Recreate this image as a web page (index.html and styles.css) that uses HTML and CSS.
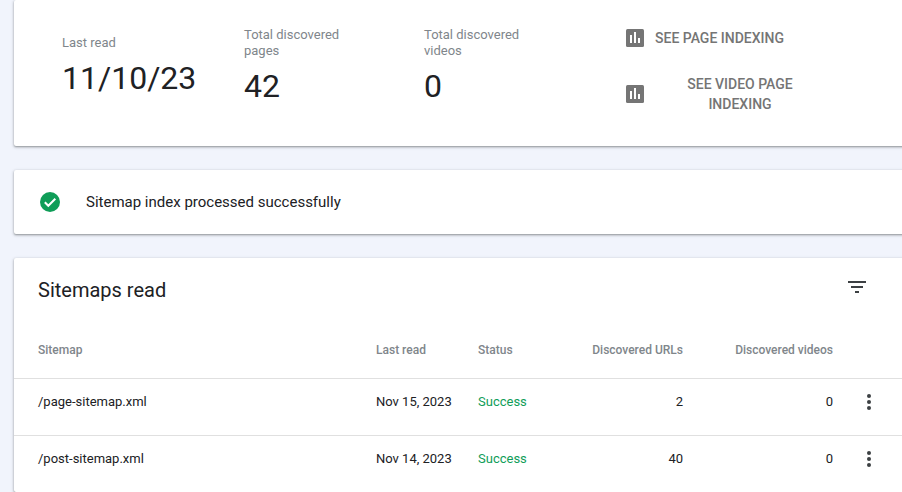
FILE: index.html
```html
<!DOCTYPE html>
<html lang="en">
<head>
<meta charset="utf-8">
<title>Sitemaps read</title>
<link rel="stylesheet" href="styles.css">
</head>
<body>
<main class="page">
  <section class="card summary">
    <div class="stat stat-date">
      <div class="stat-label">Last read</div>
      <div class="stat-value">11/10/23</div>
    </div>
    <div class="stat stat-pages">
      <div class="stat-label">Total discovered<br>pages</div>
      <div class="stat-value">42</div>
    </div>
    <div class="stat stat-videos">
      <div class="stat-label">Total discovered<br>videos</div>
      <div class="stat-value">0</div>
    </div>
    <div class="actions">
      <a class="action action-page">
        <svg class="action-icon" viewBox="0 0 20 20"><rect x="1" y="1" width="18" height="18" rx="1.500" fill="#757575"/><path fill="#fff" d="M5 7h2v8H5zM9 4h2v11H9zM13 10h2v5h-2z"/></svg>
        <span class="action-text">SEE PAGE INDEXING</span>
      </a>
      <a class="action action-video">
        <svg class="action-icon" viewBox="0 0 20 20"><rect x="1" y="1" width="18" height="18" rx="1.500" fill="#757575"/><path fill="#fff" d="M5 7h2v8H5zM9 4h2v11H9zM13 10h2v5h-2z"/></svg>
        <span class="action-text">SEE VIDEO PAGE<br>INDEXING</span>
      </a>
    </div>
  </section>

  <section class="card notice">
    <svg class="notice-icon" viewBox="0 0 20 20"><circle cx="10" cy="10" r="10" fill="#0f9d58"/><path d="M4.800 10.300l3.500 3.500 7-7" fill="none" stroke="#fff" stroke-width="2"/></svg>
    <span class="notice-text">Sitemap index processed successfully</span>
  </section>

  <section class="card sitemaps">
    <header class="sitemaps-head">
      <h2 class="sitemaps-title">Sitemaps read</h2>
      <svg class="filter-icon" viewBox="0 0 18 12"><path fill="#3c4043" d="M0 0h18v2H0zM3 5h12v2H3zM7 10h4v2H7z"/></svg>
    </header>
    <table class="table">
      <colgroup>
        <col class="col-name"><col class="col-date"><col class="col-status"><col class="col-urls"><col class="col-videos"><col class="col-menu">
      </colgroup>
      <thead>
        <tr>
          <th class="cell-name">Sitemap</th>
          <th>Last read</th>
          <th>Status</th>
          <th class="num">Discovered URLs</th>
          <th class="num">Discovered videos</th>
          <th></th>
        </tr>
      </thead>
      <tbody>
        <tr>
          <td class="cell-name">/page-sitemap.xml</td>
          <td>Nov 15, 2023</td>
          <td class="success">Success</td>
          <td class="num">2</td>
          <td class="num">0</td>
          <td class="cell-menu"><svg class="menu-icon" viewBox="0 0 4 16"><circle cx="2" cy="2" r="2" fill="#3c4043"/><circle cx="2" cy="8" r="2" fill="#3c4043"/><circle cx="2" cy="14" r="2" fill="#3c4043"/></svg></td>
        </tr>
        <tr>
          <td class="cell-name">/post-sitemap.xml</td>
          <td>Nov 14, 2023</td>
          <td class="success">Success</td>
          <td class="num">40</td>
          <td class="num">0</td>
          <td class="cell-menu"><svg class="menu-icon" viewBox="0 0 4 16"><circle cx="2" cy="2" r="2" fill="#3c4043"/><circle cx="2" cy="8" r="2" fill="#3c4043"/><circle cx="2" cy="14" r="2" fill="#3c4043"/></svg></td>
        </tr>
      </tbody>
    </table>
  </section>
</main>
</body>
</html>
```

FILE: styles.css
```css
* { box-sizing: border-box; }
html, body { margin: 0; height: 492px; overflow: hidden; }
body { background: #f1f4fc; font-family: Roboto, "Liberation Sans", sans-serif; color: #202124; }
.page { display: flex; flex-direction: column; gap: 24px; width: 910px; padding-left: 14px; }
.card { background: #fff; border-radius: 2px; box-shadow: 0 1px 2px rgba(60,64,67,.45), 0 1px 3px 1px rgba(60,64,67,.12); }

.summary { height: 146px; display: flex; align-items: center; padding: 0 0 13px 48px; }
.stat { display: flex; flex-direction: column; gap: 7px; }
.stat-date { width: 182px; }
.stat-pages { width: 180px; }
.stat-videos { width: 201px; }
.stat-label { font-size: 13px; line-height: 16px; color: #80868b; }
.stat-value { font-size: 32px; line-height: 40px; color: #202124; }

.actions { display: flex; flex-direction: column; gap: 18px; align-items: flex-start; }
.action { display: flex; align-items: center; gap: 10px; color: #757575; font-size: 14px; font-weight: 500; line-height: 20px; }
.action-icon { width: 20px; height: 20px; flex: none; }
.action-text { text-align: center; }
.action-page { height: 36px; }
.action-video .action-text { width: 170px; }

.notice { height: 64px; display: flex; align-items: center; padding-left: 26px; }
.notice-icon { width: 20px; height: 20px; flex: none; }
.notice-text { margin-left: 26px; font-size: 15px; line-height: 20px; color: #202124; }

.sitemaps { height: 234px; }
.sitemaps-head { height: 68px; display: flex; align-items: flex-start; justify-content: space-between; padding: 20px 44px 0 24px; }
.sitemaps-title { margin: 0; font-size: 20px; font-weight: 400; line-height: 24px; color: #202124; }
.filter-icon { width: 18px; height: 12px; margin-top: 3px; }

.table { width: 888px; table-layout: fixed; border-collapse: collapse; font-size: 13px; }
.col-name { width: 362px; }
.col-date { width: 102px; }
.col-status { width: 90px; }
.col-urls { width: 115px; }
.col-videos { width: 150px; }
th { height: 52px; padding: 0 0 4px; font-size: 12px; font-weight: 500; text-align: left; color: #80868b; border-bottom: 1px solid #e0e0e0; }
td { height: 57px; padding: 0 0 10px; color: #202124; border-bottom: 1px solid #e0e0e0; }
th.cell-name, td.cell-name { padding-left: 24px; }
tbody tr:last-child td { border-bottom: 0; }
.num { text-align: right; }
.success { color: #0f9d58; }
td.cell-menu { padding-left: 34px; }
.menu-icon { display: block; width: 4px; height: 16px; }
```
